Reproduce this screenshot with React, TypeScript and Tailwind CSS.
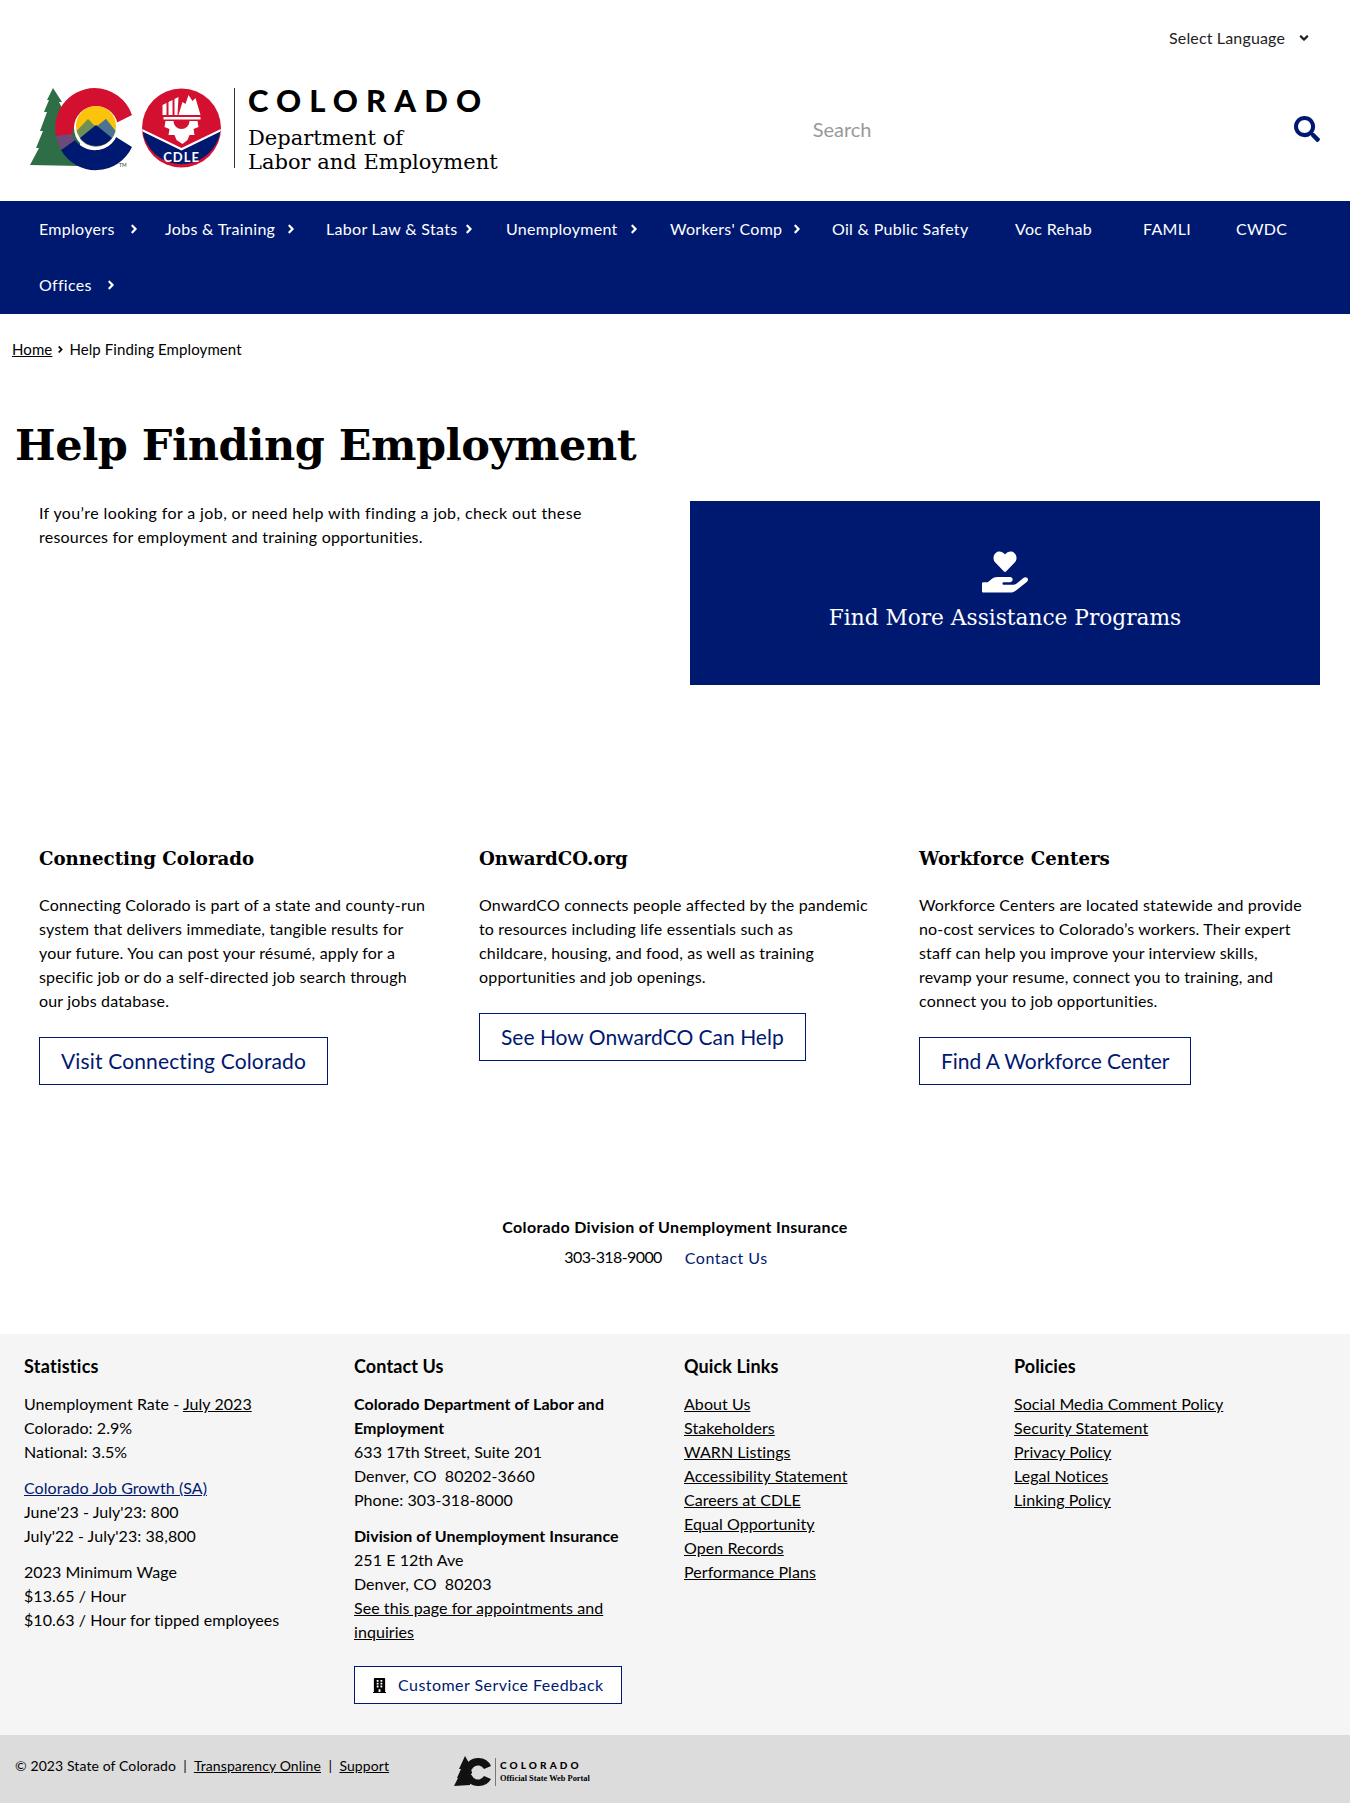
import React from "react";
import { FaSearch, FaHandHoldingHeart, FaBuilding, FaAngleRight, FaAngleDown } from "react-icons/fa";

const sans = "font-['Lato','Noto_Sans',sans-serif]";
const slab = "font-['DejaVu_Serif','Liberation_Serif',serif]";

const navItems = [
  { t: "Employers", w: "w-[126px]", c: "left-[88px]" },
  { t: "Jobs & Training", w: "w-[161px]", c: "left-[119px]" },
  { t: "Labor Law & Stats", w: "w-[180px]", c: "left-[136px]" },
  { t: "Unemployment", w: "w-[164px]", c: "left-[121px]" },
  { t: "Workers' Comp", w: "w-[162px]", c: "left-[120px]" },
  { t: "Oil & Public Safety", w: "w-[183px]" },
  { t: "Voc Rehab", w: "w-[128px]" },
  { t: "FAMLI", w: "w-[93px]" },
  { t: "CWDC", w: "w-[75px]" },
  { t: "Offices", w: "w-[125px]", c: "left-[65px]" },
];

function Logo() {
  return (
    <svg width="202" height="84" viewBox="0 0 202 84" className="shrink-0">
      <path d="M23 0 L32 14 L29 14 L37 30 L50 30 L50 78 L0 77 L9 60 L6 60 L13 43 L10 43 L17 24 L14 24 L19 12 L17 12 Z" fill="#2e6e47" />
      <g transform="translate(1 0)">
        <path d="M63.500 0 A40 40 0 0 1 101 27 L85 35 A24 24 0 0 0 41 48 L26 52 A40 40 0 0 1 63.500 0 Z" fill="#d3102f" />
        <path d="M101 59 A40 40 0 0 1 30 62 L44 52 A24 24 0 0 0 85 49 Z" fill="#001970" />
        <path d="M41 46 L44 52 L30 62 L26 52 A40 40 0 0 1 24.500 48 Z" fill="#6e4a78" />
        <circle cx="65" cy="40" r="22" fill="#fff" />
        <circle cx="65" cy="38" r="20" fill="#fcc30b" />
        <path d="M45.500 43 L57 31 L65 39 L75 31 L84.500 43 A20 20 0 0 1 50 52 Z" fill="#6f8f55" />
        <path d="M65 39 L75 31 L84.500 43 A20 20 0 0 1 78 52 Z" fill="#4c7390" />
        <path d="M49 50 L65 37 L81 50 A20 20 0 0 1 49 50 Z" fill="#001970" />
      </g>
      <g transform="translate(2.500 0)">
        <circle cx="149" cy="40" r="39.500" fill="#d3102f" />
        <path d="M110 43 L149 62 L188 43 A39.500 39.500 0 0 1 110 43 Z" fill="#001970" />
        <path d="M109.700 41 L149 60 L188.300 41 L188 43.500 L149 62.500 L110 43.500 Z" fill="#fff" />
        <path d="M130 17 L134 15 L134 27 L130 27 Z M136 14 L140 12 L140 27 L136 27 Z M142 11 L146 9 L145 27 L142 27 Z" fill="#fff" />
        <path d="M146 27 L150 14 L153 16 L156 7 L160 13 L163 10 L168 27 Z" fill="#fff" />
        <path d="M131 29 H168 V31.500 H131 Z" fill="#fff" />
        <path d="M133 33 H165 L166 39 L161 41 L162 47 L157 47 L155 52 L150 56 L144 52 L142 47 L136 47 L137 41 L132 39 Z" fill="#fff" />
        <path d="M141 33 H157 A8 8 0 0 1 141 33 Z" fill="#d3102f" />
        <text x="149" y="74" textAnchor="middle" fill="#fff" fontSize="13" fontWeight="700" letterSpacing="1" fontFamily="Lato, sans-serif">CDLE</text>
      </g>
      <text x="89" y="79" fill="#333" fontSize="5" fontFamily="Lato, sans-serif">TM</text>
    </svg>
  );
}

function SmallLogo() {
  return (
    <svg width="38" height="32" viewBox="0 0 38 32" className="shrink-0">
      <path d="M11 0 L15 7 L13 7 L18 16 L16 29 L0 30 L4 22 L3 22 L7 13 L5 13 Z" fill="#111" />
      <path d="M24 2 A14 14 0 0 1 37 10 L30 13 A7 7 0 1 0 30 20 L37 23 A14 14 0 0 1 24 30 A14 14 0 0 1 10 16 A14 14 0 0 1 24 2 Z" fill="#111" />
      <path d="M17 19 L23 12 L29 19" fill="none" stroke="#dcdcdc" strokeWidth="1" />
    </svg>
  );
}

function Column({ title, lines, cta, ctaClass }: { title: string; lines: string[]; cta: string; ctaClass: string }) {
  return (
    <div className="w-[440px] shrink-0 pr-[40px]">
      <h3 className={`${slab} mt-[1px] text-[18.200px] leading-[24px] font-bold text-black`}>{title}</h3>
      <div className="mt-[22px] text-[16px] leading-[24px] tracking-[0.170px] text-black">
        {lines.map((l) => <div key={l} className="whitespace-nowrap">{l}</div>)}
      </div>
      <a className={`mt-[24px] inline-block border border-[#001970] px-[21px] text-[21px] leading-[46px] text-[#001970] ${ctaClass}`}>{cta}</a>
    </div>
  );
}

const ul = "underline";

export default function App() {
  return (
    <div className={`${sans} h-[1803px] overflow-hidden bg-white text-black`}>
      <header className="h-[201px] pl-[30px] pr-[30px]">
        <div className="flex h-[88px] justify-end pr-[9px] pt-[26px]">
          <div className="flex items-start text-[16px] leading-[24px] tracking-[0.150px] text-[#222]">
            <span>Select Language</span>
            <FaAngleDown className="ml-[12px] mt-[5px] text-[14px]" />
          </div>
        </div>
        <div className="flex items-start">
          <Logo />
          <div className="ml-[2px] h-[80px] w-px bg-[#333]" />
          <div className="ml-[13px] -mt-[2px]">
            <div className="text-[31px] leading-[28px] font-black tracking-[8.100px]">COLORADO</div>
            <div className={`${slab} mt-[12px] text-[21px] leading-[24px] whitespace-nowrap`}>Department of<br />Labor and Employment</div>
          </div>
          <div className="ml-[315px] mt-[27px] flex flex-1 items-center justify-between">
            <span className="text-[20px] leading-[28px] text-[#999]">Search</span>
            <FaSearch className="text-[26px] text-[#001970]" />
          </div>
        </div>
      </header>

      <nav className="flex h-[113px] flex-wrap content-start bg-[#001970] pl-[39px] text-[16px] leading-[56px] tracking-[0.300px] text-white">
        {navItems.map((n) => (
          <div key={n.t} className={`relative ${n.w} h-[56px] whitespace-nowrap`}>
            {n.t}
            {n.c && <FaAngleRight className={`absolute top-[21px] ${n.c} text-[14px]`} />}
          </div>
        ))}
      </nav>

      <div className="flex items-center pl-[12px] pt-[23px] text-[15px] leading-[24px] tracking-[0.100px]">
        <a className={ul}>Home</a>
        <FaAngleRight className="mx-[3px] text-[11px]" />
        <span>Help Finding Employment</span>
      </div>

      <h1 className={`${slab} ml-[15px] mt-[56px] text-[43px] leading-[56px] font-bold tracking-[-0.500px] whitespace-nowrap`}>Help Finding Employment</h1>

      <section className="mt-[28px] flex pl-[39px] pr-[30px]">
        <div className="w-[651px] text-[16px] leading-[24px] tracking-[0.380px]">
          <div>If you’re looking for a job, or need help with finding a job, check out these</div>
          <div className="tracking-[0.220px]">resources for employment and training opportunities.</div>
        </div>
        <div className="flex h-[184px] w-[630px] flex-col items-center bg-[#001970] text-white">
          <FaHandHoldingHeart className="mt-[48px] text-[46px]" />
          <div className={`${slab} mt-[8px] text-[21.700px] leading-[30px]`}>Find More Assistance Programs</div>
        </div>
      </section>

      <section className="mt-[161px] flex pl-[39px]">
        <Column title="Connecting Colorado" ctaClass="tracking-[0.150px]" cta="Visit Connecting Colorado" lines={["Connecting Colorado is part of a state and county-run", "system that delivers immediate, tangible results for", "your future. You can post your résumé, apply for a", "specific job or do a self-directed job search through", "our jobs database."]} />
        <Column title="OnwardCO.org" ctaClass="tracking-[0px]" cta="See How OnwardCO Can Help" lines={["OnwardCO connects people affected by the pandemic", "to resources including life essentials such as", "childcare, housing, and food, as well as training", "opportunities and job openings."]} />
        <Column title="Workforce Centers" ctaClass="tracking-[-0.050px]" cta="Find A Workforce Center" lines={["Workforce Centers are located statewide and provide", "no-cost services to Colorado’s workers. Their expert", "staff can help you improve your interview skills,", "revamp your resume, connect you to training, and", "connect you to job opportunities."]} />
      </section>

      <section className="mt-[130px] text-center text-[16px] leading-[24px]">
        <div className="font-bold tracking-[0.320px]">Colorado Division of Unemployment Insurance</div>
        <div className="mt-[6px] flex justify-center pr-[18px]">
          <span className="tracking-[-0.600px]">303-318-9000</span>
          <a className="ml-[23px] mt-[1px] tracking-[0.500px] text-[#001970]">Contact Us</a>
        </div>
      </section>

      <footer className="absolute left-0 top-[1334px] w-full">
        <div className="flex h-[401px] bg-[#f5f5f5] pl-[24px] pt-[20px] text-[16px] leading-[24px] tracking-[0.060px]">
          <div className="w-[330px]">
            <h4 className="text-[18px] font-bold leading-[24px] tracking-[0.250px]">Statistics</h4>
            <div className="mt-[14px]">Unemployment Rate - <a className={ul}>July 2023</a><br />Colorado: 2.9%<br />National: 3.5%</div>
            <div className="mt-[12px]"><a className={`${ul} text-[#001970]`}>Colorado Job Growth (SA)</a><br />June'23 - July'23: 800<br />July'22 - July'23: 38,800</div>
            <div className="mt-[12px]">2023 Minimum Wage<br />$13.65 / Hour<br />$10.63 / Hour for tipped employees</div>
          </div>
          <div className="w-[330px]">
            <h4 className="text-[18px] font-bold leading-[24px] tracking-[0.100px]">Contact Us</h4>
            <div className="mt-[14px]"><b>Colorado Department of Labor and<br />Employment</b><br />633 17th Street, Suite 201<br />Denver, CO&nbsp; 80202-3660<br />Phone: 303-318-8000</div>
            <div className="mt-[12px]"><b>Division of Unemployment Insurance</b><br />251 E 12th Ave<br />Denver, CO&nbsp; 80203<br /><a className={ul}>See this page for appointments and<br />inquiries</a></div>
            <a className="mt-[22px] flex h-[38px] w-[268px] items-center border border-[#001970] bg-white pl-[17px] tracking-[0.450px] text-[#001970]">
              <FaBuilding className="mr-[11px] text-[15px] text-black" />Customer Service Feedback
            </a>
          </div>
          <div className="w-[330px]">
            <h4 className="text-[18px] font-bold leading-[24px] tracking-[0.100px]">Quick Links</h4>
            <div className="mt-[14px] flex flex-col items-start">
              {["About Us", "Stakeholders", "WARN Listings", "Accessibility Statement", "Careers at CDLE", "Equal Opportunity", "Open Records", "Performance Plans"].map((x) => <a key={x} className={ul}>{x}</a>)}
            </div>
          </div>
          <div className="w-[300px]">
            <h4 className="text-[18px] font-bold leading-[24px] tracking-[0.100px]">Policies</h4>
            <div className="mt-[14px] flex flex-col items-start">
              {["Social Media Comment Policy", "Security Statement", "Privacy Policy", "Legal Notices", "Linking Policy"].map((x) => <a key={x} className={ul}>{x}</a>)}
            </div>
          </div>
        </div>
        <div className="flex h-[68px] items-start bg-[#dcdcdc] pl-[15px] pt-[21px] text-[14px] leading-[20px] tracking-[0.100px]">
          <div className="w-[439px] whitespace-nowrap">© 2023 State of Colorado &nbsp;|&nbsp; <a className={ul}>Transparency Online</a> &nbsp;|&nbsp; <a className={ul}>Support</a></div>
          <div className="flex items-center">
            <SmallLogo />
            <div className="ml-[3px] h-[28px] w-px bg-[#777]" />
            <div className="ml-[4px] tracking-normal">
              <div className="text-[10px] leading-[13px] font-black tracking-[3.100px]">COLORADO</div>
              <div className="font-['Liberation_Serif',serif] text-[8.400px] leading-[13px] font-bold">Official State Web Portal</div>
            </div>
          </div>
        </div>
      </footer>
    </div>
  );
}
